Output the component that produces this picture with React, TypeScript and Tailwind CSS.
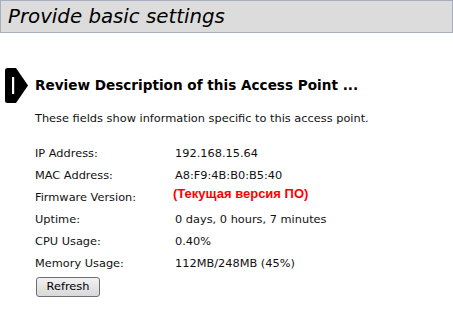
import React from 'react';

const rows = [
  { label: 'IP Address:', value: '192.168.15.64' },
  { label: 'MAC Address:', value: 'A8:F9:4B:B0:B5:40' },
  { label: 'Firmware Version:', value: '(Текущая версия ПО)', red: true },
  { label: 'Uptime:', value: '0 days, 0 hours, 7 minutes' },
  { label: 'CPU Usage:', value: '0.40%' },
  { label: 'Memory Usage:', value: '112MB/248MB (45%)' },
];

const StepIcon = () => (
  <svg width="24" height="35" viewBox="0 0 24 35">
    <path d="M2.5 0 H11 L23 17.5 L11 35 H2.5 Q0 35 0 32.5 V2.5 Q0 0 2.5 0 Z" fill="#000" />
    <rect x="7" y="9" width="2.2" height="17" fill="#fff" />
  </svg>
);

export default function App() {
  return (
    <div className="w-[453px] h-[319px] bg-white text-[#111] font-['DejaVu_Sans',Verdana,sans-serif] overflow-hidden">
      {/* Title bar */}
      <div className="h-[33px] w-[453px] border border-[#a8aebd] bg-[#dcdcdc] flex items-center pl-[7px]">
        <h1 className="text-[19.8px] italic text-black leading-none">Provide basic settings</h1>
      </div>

      <div className="mt-[35px] flex items-center">
        <div className="ml-[5px] w-[30px]">
          <StepIcon />
        </div>
        <h2 className="text-[13.6px] font-bold text-black">Review Description of this Access Point ...</h2>
      </div>

      <div className="pl-[35px] text-[11.35px]">
        <p className="mt-[7px]">These fields show information specific to this access point.</p>

        <div className="mt-[15px]">
          {rows.map((r) => (
            <div key={r.label} className="flex items-center h-[22px]">
              <div className="w-[140px]">{r.label}</div>
              <div
                className={
                  r.red
                    ? "text-[#ff0000] font-bold text-[13px] font-['Liberation_Sans',Arial,sans-serif] -ml-[2px] -mt-[6px]"
                    : ''
                }
              >
                {r.value}
              </div>
            </div>
          ))}
        </div>

        <button className="mt-[3px] ml-[1px] w-[64px] h-[20px] border border-[#707070] rounded-[3px] bg-gradient-to-b from-[#f2f2f2] to-[#d8d8d8] text-[11.35px] text-black leading-none">
          Refresh
        </button>
      </div>
    </div>
  );
}
